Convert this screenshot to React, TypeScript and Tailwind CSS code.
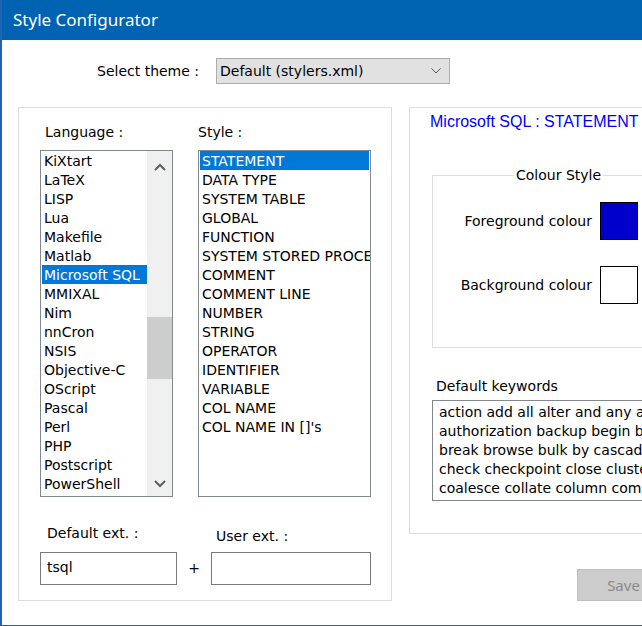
const languages = [
  "KiXtart",
  "LaTeX",
  "LISP",
  "Lua",
  "Makefile",
  "Matlab",
  "Microsoft SQL",
  "MMIXAL",
  "Nim",
  "nnCron",
  "NSIS",
  "Objective-C",
  "OScript",
  "Pascal",
  "Perl",
  "PHP",
  "Postscript",
  "PowerShell",
];

const styles = [
  "STATEMENT",
  "DATA TYPE",
  "SYSTEM TABLE",
  "GLOBAL",
  "FUNCTION",
  "SYSTEM STORED PROCEDURE",
  "COMMENT",
  "COMMENT LINE",
  "NUMBER",
  "STRING",
  "OPERATOR",
  "IDENTIFIER",
  "VARIABLE",
  "COL NAME",
  "COL NAME IN []'s",
];

const keywords = [
  "action add all alter and any as asc",
  "authorization backup begin between",
  "break browse bulk by cascade case",
  "check checkpoint close clustered",
  "coalesce collate column commit committed",
];

const Chevron = ({ up }: { up?: boolean }) => (
  <svg width="12" height="8" viewBox="0 0 12 8" className="text-[#606060]">
    <path
      d={up ? "M1 7 L6 2 L11 7" : "M1 1 L6 6 L11 1"}
      fill="none"
      stroke="currentColor"
      strokeWidth="2"
    />
  </svg>
);

const App = () => {
  return (
    <div className="w-[642px] h-[626px] overflow-hidden flex flex-col bg-white border-l-[2px] border-b border-[#1f64b0] font-['DejaVu_Sans',sans-serif] text-[14px] text-black">
      {/* title bar */}
      <div className="h-[40px] shrink-0 bg-[#0063b1] flex items-center pl-[13px] -ml-[2px] font-['Noto_Sans',sans-serif] text-[17px] text-white">
        Style Configurator
      </div>

      <div className="flex flex-col pt-[18px] w-[900px]">
        {/* theme row */}
        <div className="flex items-center h-[26px] ml-[95px]">
          <span className="w-[119px] pt-[1px]">Select theme :</span>
          <div className="w-[234px] h-[26px] bg-[#e1e1e1] border border-[#adadad] flex items-center justify-between pl-[3px] pr-[8px]">
            <span className="pt-[1px]">Default (stylers.xml)</span>
            <svg width="10" height="6" viewBox="0 0 10 6">
              <path d="M0.5 0.5 L5 5 L9.5 0.5" fill="none" stroke="#555555" strokeWidth="1" />
            </svg>
          </div>
        </div>

        {/* panels */}
        <div className="flex gap-[17px] mt-[23px] pl-[16px]">
          {/* left panel */}
          <div className="w-[374px] h-[494px] shrink-0 border border-[#dcdcdc] pl-[21px] pt-[14px]">
            <div className="flex gap-[25px]">
              <div className="w-[133px]">
                <div className="h-[19px] leading-[19px] pt-[1px] pl-[5px]">Language :</div>
                <div className="mt-[9px] h-[347px] border border-[#828790] flex">
                  <div className="flex-1 pl-[1px] overflow-hidden">
                    {languages.map((l) => (
                      <div
                        key={l}
                        className={
                          l === "Microsoft SQL"
                            ? "h-[19px] leading-[19px] pt-[1px] px-[2px] whitespace-nowrap bg-[#0078d7] text-white"
                            : "h-[19px] leading-[19px] pt-[1px] px-[2px] whitespace-nowrap"
                        }
                      >
                        {l}
                      </div>
                    ))}
                  </div>
                  <div className="w-[25px] bg-[#f0f0f0] flex flex-col">
                    <div className="h-[25px] flex items-center justify-center pt-[6px]">
                      <Chevron up />
                    </div>
                    <div className="h-[141px]" />
                    <div className="h-[62px] bg-[#cdcdcd]" />
                    <div className="flex-1 flex items-end justify-center pb-[8px]">
                      <Chevron />
                    </div>
                  </div>
                </div>
              </div>
              <div className="w-[173px]">
                <div className="h-[19px] leading-[19px] pt-[1px]">Style :</div>
                <div className="mt-[9px] h-[347px] border border-[#828790] px-[1px] overflow-hidden">
                  {styles.map((s, i) => (
                    <div
                      key={s}
                      className={
                        i === 0
                          ? "h-[19px] leading-[19px] pt-[1px] px-[2px] whitespace-nowrap bg-[#0078d7] text-white"
                          : "h-[19px] leading-[19px] pt-[1px] px-[2px] whitespace-nowrap"
                      }
                    >
                      {s}
                    </div>
                  ))}
                </div>
              </div>
            </div>

            {/* extension row */}
            <div className="flex">
              <div className="w-[137px] flex flex-col">
                <div className="mt-[26px] h-[19px] leading-[19px] pt-[1px] pl-[7px]">Default ext. :</div>
                <div className="mt-[10px] h-[33px] border border-[#7a7a7a] pl-[6px] leading-[28px]">tsql</div>
              </div>
              <div className="w-[34px] self-end h-[33px] leading-[33px] text-center">+</div>
              <div className="w-[160px] flex flex-col">
                <div className="mt-[29px] h-[19px] leading-[19px] pt-[1px] pl-[5px]">User ext. :</div>
                <div className="mt-[7px] h-[33px] border border-[#7a7a7a]" />
              </div>
            </div>
          </div>

          {/* right column */}
          <div className="flex flex-col">
            <div className="w-[320px] h-[427px] border border-[#dcdcdc] flex flex-col">
              <div className="mt-[5px] ml-[20px] h-[18px] leading-[18px] font-['Liberation_Sans',sans-serif] text-[16px] text-[#0000ff] whitespace-nowrap">
                Microsoft SQL : STATEMENT
              </div>

              <fieldset className="mt-[35px] ml-[22px] w-[290px] h-[182px] border border-[#dcdcdc]">
                <legend className="ml-[81px] px-[2px] leading-[19px] text-[14px]">Colour Style</legend>
                <div className="flex items-center mt-[17px]">
                  <span className="w-[159px] text-right">Foreground colour</span>
                  <div className="ml-[8px] w-[38px] h-[38px] bg-[#0000cd] border border-black" />
                </div>
                <div className="flex items-center mt-[26px]">
                  <span className="w-[159px] text-right">Background colour</span>
                  <div className="ml-[8px] w-[38px] h-[38px] bg-white border border-black" />
                </div>
              </fieldset>

              <div className="mt-[29px] ml-[26px] h-[19px] leading-[19px]">Default keywords</div>
              <div className="mt-[4px] ml-[22px] w-[290px] h-[101px] border border-[#828790] pl-[6px] pt-[2px] overflow-hidden">
                {keywords.map((k) => (
                  <div key={k} className="h-[19px] leading-[19px] whitespace-nowrap">
                    {k}
                  </div>
                ))}
              </div>
            </div>

            <button className="mt-[35px] ml-[168px] w-[93px] h-[32px] bg-[#cccccc] border border-[#bfbfbf] text-[#8a8a8a] font-['Noto_Sans',sans-serif] text-[15px]">
              Save
            </button>
          </div>
        </div>
      </div>
    </div>
  );
};

export default App;
